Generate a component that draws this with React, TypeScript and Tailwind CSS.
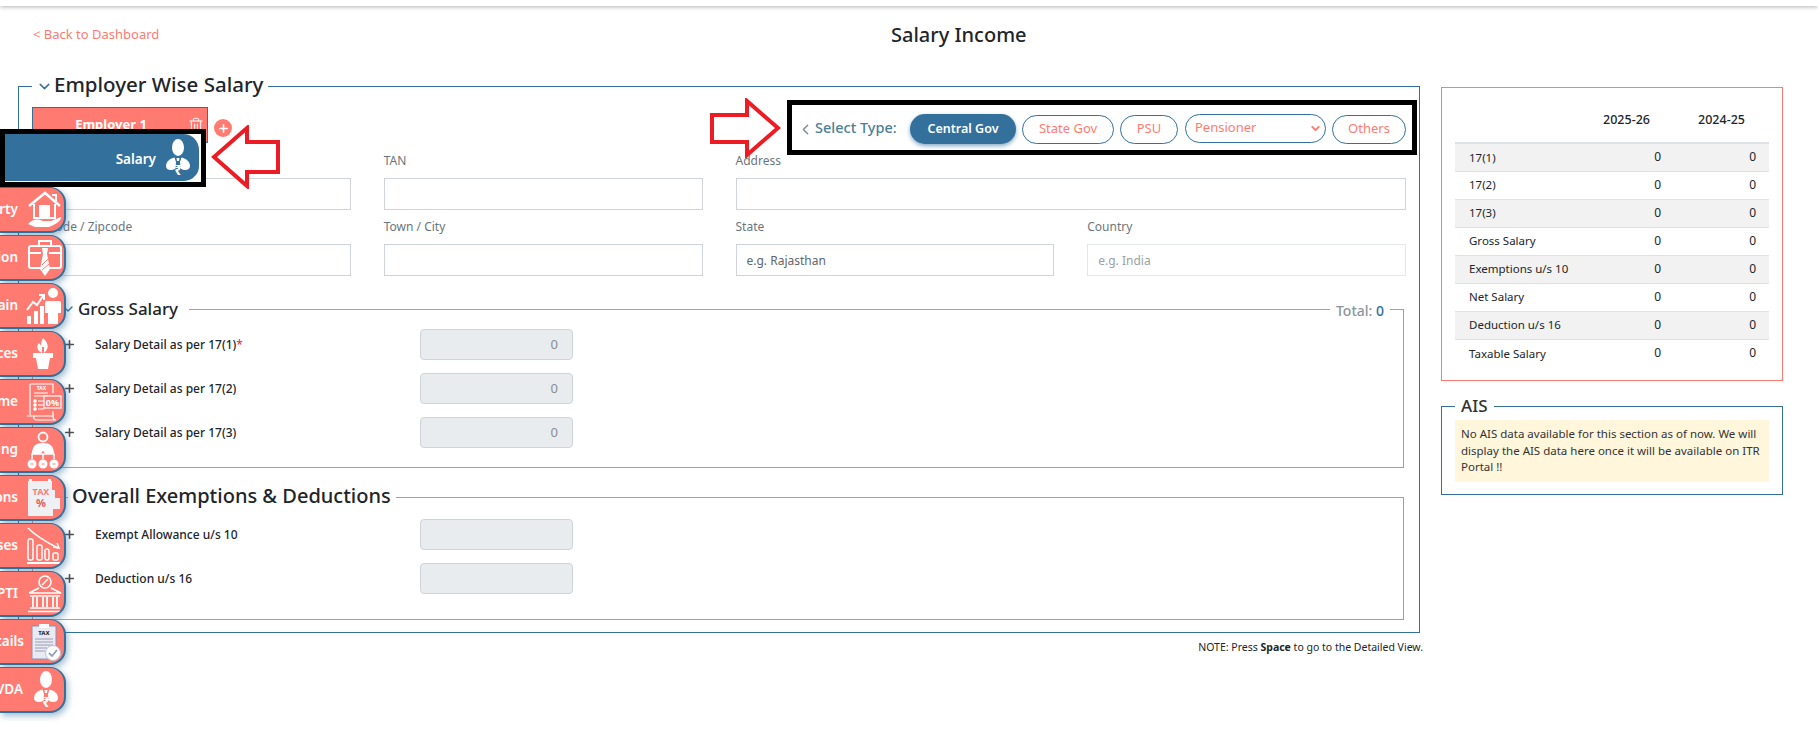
import React from 'react';
import { ChevronDown, ChevronLeft, Plus, Trash2 } from 'lucide-react';

const HouseIcon = () => (
  <svg width="36" height="38" viewBox="0 0 36 38" fill="none" stroke="#fff" strokeWidth="2">
    <path d="M2 15 L18 2 L33 15" strokeWidth="2.5" />
    <path d="M25 4 h4 v6" />
    <path d="M7 13 V27 H28 V13" />
    <rect x="13" y="15" width="9" height="12" fill="#fff" />
    <path d="M1 33 C6 27 12 28 16 30 H24 L34 26 C35 29 28 34 22 36 H8 Z" fill="#fff" stroke="none" />
  </svg>
);

const BriefcaseIcon = () => (
  <svg width="36" height="38" viewBox="0 0 36 38" fill="none" stroke="#fff" strokeWidth="2">
    <path d="M12 7 V2 H24 V7" />
    <rect x="2" y="7" width="32" height="22" rx="2" />
    <path d="M2 14 H14 M22 14 H34" />
    <path d="M15 9 H21 L20 15 L23 30 L18 37 L13 30 L16 15 Z" fill="#fff" stroke="none" />
    <path d="M15 26 L21 20 M15 31 L22 25" stroke="#ff7b72" strokeWidth="1" />
  </svg>
);

const GainIcon = () => (
  <svg width="35" height="38" viewBox="0 0 35 38" fill="#fff">
    <circle cx="27" cy="6" r="5" />
    <path d="M20 14 H33 Q35 14 35 17 V26 L32 26 V37 H22 V26 L19 26 V17 Q19 14 20 14 Z" />
    <rect x="1" y="29" width="4" height="8" />
    <rect x="8" y="24" width="4" height="13" />
    <rect x="14" y="19" width="4" height="18" />
    <path d="M1 23 L7 15 L11 18 L17 9 M13 8 H18 V13" fill="none" stroke="#fff" strokeWidth="2" />
  </svg>
);

const PlantIcon = () => (
  <svg width="20" height="31" viewBox="0 0 20 31" fill="#fff">
    <path d="M10 0 C15 5 16 9 13 13 L11 15 V9 L9 9 V15 C4 13 3 8 6 5 C7 7 8 7 8 7 C8 4 9 2 10 0 Z" />
    <path d="M0 15 H20 V20 H17 L15 31 H5 L3 20 H0 Z" />
  </svg>
);

const IncomeIcon = () => (
  <svg width="36" height="38" viewBox="0 0 36 38" fill="none" stroke="#fff" strokeWidth="1.2">
    <path d="M4 1 H27 V10 M27 28 V33 H8 M4 1 V32" />
    <path d="M1 33 H8 Q7 37 11 37 H30 Q27 37 27 33" />
    <text x="15.5" y="7" fontSize="5" fontWeight="700" textAnchor="middle" fill="#fff" stroke="none" fontFamily="Noto Sans, sans-serif">TAX</text>
    <path d="M8 10 H22 M8 13 H22" />
    <circle cx="9" cy="18" r="1.2" fill="#fff" />
    <circle cx="9" cy="22" r="1.2" fill="#fff" />
    <circle cx="9" cy="26" r="1.2" fill="#fff" />
    <path d="M12 18 H18 M12 22 H18 M12 26 H18" />
    <rect x="18" y="13" width="17" height="12" fill="#ff7b72" />
    <text x="26.5" y="22.5" fontSize="9" fontWeight="700" textAnchor="middle" fill="#fff" stroke="none" fontFamily="Noto Sans, sans-serif">0%</text>
  </svg>
);

const ClubbingIcon = () => (
  <svg width="32" height="38" viewBox="0 0 32 38" fill="none" stroke="#fff" strokeWidth="2">
    <circle cx="16" cy="6" r="4.5" strokeWidth="1.8" />
    <path d="M5 23 C5 15 9 12 16 12 C23 12 27 15 27 23 H19 L16 20 L13 23 Z" fill="#fff" stroke="none" />
    <path d="M5 28 V23 H27 V28 M16 23 V28" strokeWidth="1.5" />
    <circle cx="5" cy="33" r="4.5" fill="#fff" stroke="none" />
    <circle cx="16" cy="33" r="4.5" fill="#fff" stroke="none" />
    <circle cx="27" cy="33" r="4.5" fill="#fff" stroke="none" />
    <path d="M3.5 33 H6.5 M14.5 33 H17.5 M25.5 33 H28.5" stroke="#ff7b72" strokeWidth="1.2" />
  </svg>
);

const TaxIcon = () => (
  <svg width="34" height="38" viewBox="0 0 34 38">
    <path d="M1 2 H25 V11 H28 V19 H33 V30 H26 V37 H1 Z" fill="#eef0f4" />
    <rect x="2" y="0" width="3" height="3" fill="#fff" />
    <rect x="21" y="0" width="3" height="3" fill="#fff" />
    <text x="14" y="16" fontSize="9" fontWeight="700" textAnchor="middle" fill="#f3807b" fontFamily="Noto Sans, sans-serif">TAX</text>
    <text x="14" y="28" fontSize="11" fontWeight="700" textAnchor="middle" fill="#e35d5d" fontFamily="Noto Sans, sans-serif">%</text>
  </svg>
);

const LossIcon = () => (
  <svg width="35" height="38" viewBox="0 0 35 38" fill="none" stroke="#fff" strokeWidth="1.5">
    <path d="M2 1 C10 9 22 16 32 21" />
    <path d="M27 20 L33 21 L31 16" />
    <rect x="2" y="12" width="5" height="21" rx="2" />
    <rect x="11" y="18" width="5" height="15" rx="2" />
    <rect x="19" y="22" width="4" height="11" rx="2" />
    <rect x="27" y="26" width="5" height="7" rx="1" />
    <path d="M1 36 H34" strokeWidth="2" />
  </svg>
);

const BankIcon = () => (
  <svg width="36" height="38" viewBox="0 0 36 38" fill="none" stroke="#fff" strokeWidth="1.6">
    <circle cx="18" cy="7" r="6" />
    <path d="M15 10 L21 4" />
    <path d="M2 18 L12 13 M24 13 L34 18 H2" />
    <path d="M3 21 H33" />
    <path d="M6 22 V32 M10 22 V32 M16 22 V32 M20 22 V32 M26 22 V32 M30 22 V32" strokeWidth="1.8" />
    <path d="M3 33 H33 M1 36.5 H35" />
  </svg>
);

const ClipboardIcon = () => (
  <svg width="30" height="38" viewBox="0 0 30 38">
    <rect x="1" y="3" width="24" height="33" fill="#e9ebf3" stroke="#8f8fb0" />
    <rect x="8" y="1" width="10" height="4" fill="#fff" />
    <text x="13" y="12" fontSize="6" fontWeight="800" textAnchor="middle" fill="#333" fontFamily="Noto Sans, sans-serif">TAX</text>
    <path d="M4 16 H22 M4 19 H22 M4 22 H22 M4 25 H16 M4 28 H14" stroke="#9a9ab5" strokeWidth="1" />
    <circle cx="22" cy="30" r="7.5" fill="#fff" stroke="#bcc2d4" />
    <path d="M18 30 L21 33 L26 27" fill="none" stroke="#8da0b5" strokeWidth="1.8" />
  </svg>
);

const PersonIcon = ({ w = 24, h = 38 }: { w?: number; h?: number }) => (
  <svg width={w} height={h} viewBox="0 0 24 38" fill="#fff">
    <ellipse cx="12" cy="8.5" rx="6" ry="8.5" />
    <path d="M8.5 18.5 C3.5 19.5 0 23 0 27 C0 31 5 32.5 9.5 29.5 L10 23 Z" />
    <path d="M15.5 18.5 C20.5 19.5 24 23 24 27 C24 31 19 32.5 14.5 29.5 L14 23 Z" />
    <path d="M10.5 19 H13.5 L13 22 H11 Z" />
    <text x="12.5" y="36" fontSize="14" fontWeight="700" textAnchor="middle" fill="#fff" fontFamily="Noto Sans, sans-serif">₹</text>
  </svg>
);

const sideItems = [
  { name: 'House Property', icon: <HouseIcon />, cls: 'gap-[9px] pr-[1px]' },
  { name: 'Profession', icon: <BriefcaseIcon />, cls: 'gap-[9px] pr-[1px]' },
  { name: 'Capital Gain', icon: <GainIcon />, cls: 'gap-[8px] pr-[3px]' },
  { name: 'Other Sources', icon: <PlantIcon />, cls: 'gap-[15px] pr-[11px]' },
  { name: 'Exempt Income', icon: <IncomeIcon />, cls: 'gap-[8px] pr-[2px]' },
  { name: 'Clubbing', icon: <ClubbingIcon />, cls: 'gap-[9px] pr-[5px]' },
  { name: 'Deductions', icon: <TaxIcon />, cls: 'gap-[9px] pr-[3px]' },
  { name: 'Losses', icon: <LossIcon />, cls: 'gap-[8px] pr-[3px]' },
  { name: 'PTI', icon: <BankIcon />, cls: 'gap-[9px] pr-[1px]' },
  { name: 'Tax Details', icon: <ClipboardIcon />, cls: 'gap-[7px] pr-[3px]' },
  { name: 'VDA', icon: <PersonIcon />, cls: 'gap-[11px] pr-[6px]' },
];

const summaryRows = ['17(1)', '17(2)', '17(3)', 'Gross Salary', 'Exemptions u/s 10', 'Net Salary', 'Deduction u/s 16', 'Taxable Salary'];

const Field = ({ label, placeholder, className = '', light = false }: { label: string; placeholder?: string; className?: string; light?: boolean }) => (
  <div className={className}>
    <label className="mb-[8px] block h-[18px] text-[12px] leading-[18px] text-[#6c757d]">{label}</label>
    <input
      placeholder={placeholder}
      className={`block h-[32px] w-full border px-[10px] text-[12px] outline-none ${light ? 'border-[#e3e6ea] placeholder:text-[#9aa0a6]' : 'border-[#ced4da] placeholder:text-[#5f666d]'}`}
    />
  </div>
);

const AmountRow = ({ label, value, required }: { label: string; value?: string; required?: boolean }) => (
  <div className="flex items-center">
    <Plus className="ml-[3px] h-[13px] w-[13px] shrink-0 text-[#4b4f54]" strokeWidth={3} />
    <div className="ml-[19px] w-[325px] text-[12px] font-medium text-[#212529]">
      {label}
      {required && <span className="text-[#e8304f]">*</span>}
    </div>
    <div className="flex h-[31px] w-[153px] items-center justify-end rounded-[4px] border border-[#ced4da] bg-[#e9ecef] px-[14px] text-[13px] text-[#868e96]">
      {value}
    </div>
  </div>
);

const App: React.FC = () => {
  return (
    <div className="relative h-[747px] w-[1818px] overflow-hidden bg-white font-['Noto_Sans',sans-serif] text-[#212529]">
      <div className="h-[6px] bg-white shadow-[0_1px_4px_rgba(0,0,0,0.3)]" />

      {/* Page header */}
      <div className="flex h-[66px] items-start pl-[33px] pt-[16px]">
        <a className="w-[858px] pt-[3px] text-[13px] leading-[18px] text-[#ff7b72]">&lt; Back to Dashboard</a>
        <h1 className="text-[20px] font-medium leading-[26px] text-[#212529]">Salary Income</h1>
      </div>

      <div className="flex items-start gap-[21px] pl-[18px]">
        {/* Left column */}
        <div className="w-[1402px]">
          <fieldset className="border border-[#33709c] px-[13px] pb-[12px]">
            <legend className="flex h-[28px] items-center pl-[4px] pr-[5px]">
              <ChevronDown className="mr-[1px] h-[17px] w-[17px] text-[#33709c]" strokeWidth={2} />
              <span className="pb-[3px] text-[20.5px] font-medium leading-[25px]">Employer Wise Salary</span>
            </legend>

            <div className="flex h-[52px] items-start justify-between">
              <div className="mt-[7px] flex items-center">
                <div className="relative flex h-[36px] w-[176px] items-center justify-center border border-[#33709c] bg-[#ff7b72] pr-[18px] text-[13px] font-bold text-white">
                  Employer 1
                  <Trash2 className="absolute right-[3px] top-[9px] h-[16px] w-[16px] text-white" strokeWidth={1.5} />
                </div>
                <div className="ml-[6px] mt-[6px] flex h-[18px] w-[18px] items-center justify-center rounded-full bg-[#ff7b72]">
                  <Plus className="h-[13px] w-[13px] text-white" strokeWidth={3} />
                </div>
              </div>

              {/* Select type */}
              <div className="relative z-10 -mr-[11px] flex h-[55px] w-[630px] items-center border-[5px] border-black bg-white pl-[5px] pt-[3px]">
                <ChevronLeft className="h-[17px] w-[17px] text-[#7b8a93]" strokeWidth={2} />
                <span className="-mt-[3px] ml-[1px] w-[95px] text-[14.5px] font-medium text-[#4a7f96]">Select Type:</span>
                <button className="flex h-[30px] w-[106px] items-center justify-center rounded-full bg-[#33709c] text-[12.5px] font-semibold text-white shadow-[0_2px_4px_rgba(51,112,156,0.6)]">
                  Central Gov
                </button>
                <button className="ml-[6px] h-[29px] w-[92px] rounded-full border border-[#33709c] text-[13px] text-[#ff7b72]">State Gov</button>
                <button className="ml-[6px] h-[29px] w-[58px] rounded-full border border-[#33709c] text-[13px] text-[#ff7b72]">PSU</button>
                <div className="relative -mt-[2px] ml-[7px] h-[29px] w-[141px]">
                  <select className="h-full w-full appearance-none rounded-full border border-[#33709c] bg-white pl-[9px] text-[13px] text-[#ff7b72] outline-none">
                    <option>Pensioner</option>
                  </select>
                  <ChevronDown className="absolute right-[4px] top-[8px] h-[13px] w-[13px] text-[#ff7b72]" strokeWidth={3.5} />
                </div>
                <button className="ml-[6px] h-[29px] w-[74px] rounded-full border border-[#33709c] text-[13px] text-[#ff7b72]">Others</button>
              </div>
            </div>

            <div className="grid grid-cols-4 gap-x-[33px] gap-y-[8px]">
              <Field label="Flat / Door No." />
              <Field label="TAN" />
              <Field label="Address" className="col-span-2" />
              <Field label="Pincode / Zipcode" />
              <Field label="Town / City" />
              <Field label="State" placeholder="e.g. Rajasthan" />
              <Field label="Country" placeholder="e.g. India" light />
            </div>

            {/* Gross salary */}
            <fieldset className="relative mt-[19px] w-[1372px] border border-[#ff7b72] pb-[19px] pl-[27px]">
              <legend className="flex h-[28px] items-center pr-[11px]">
                <ChevronDown className="mr-[2px] h-[16px] w-[16px] text-[#33709c]" strokeWidth={2} />
                <span className="text-[17px] font-medium">Gross Salary</span>
              </legend>
              <div className="absolute -top-[25px] right-[13px] bg-white px-[6px] text-[14px] font-medium leading-[26px] text-[#8c949b]">
                Total: <span className="text-[#33709c]">0</span>
              </div>
              <div className="mt-[6px] flex flex-col gap-[13px]">
                <AmountRow label="Salary Detail as per 17(1)" value="0" required />
                <AmountRow label="Salary Detail as per 17(2)" value="0" />
                <AmountRow label="Salary Detail as per 17(3)" value="0" />
              </div>
            </fieldset>

            {/* Overall exemptions */}
            <fieldset className="mt-[14px] w-[1372px] border border-[#ff7b72] pb-[25px] pl-[27px]">
              <legend className="ml-[8px] flex h-[30px] items-center pl-[4px] pr-[5px]">
                <span className="pb-[2px] text-[20px] font-medium leading-[26px]">Overall Exemptions &amp; Deductions</span>
              </legend>
              <div className="mt-[7px] flex flex-col gap-[13px]">
                <AmountRow label="Exempt Allowance u/s 10" />
                <AmountRow label="Deduction u/s 16" />
              </div>
            </fieldset>
          </fieldset>

          <p className="-mr-[3px] mt-[6px] text-right text-[10.5px] leading-[16px] text-[#212529]">
            NOTE: Press <b>Space</b> to go to the Detailed View.
          </p>
        </div>

        {/* Right column */}
        <div className="w-[342px] pt-[15px]">
          <div className="h-[294px] border border-[#ff7b72] px-[13px] pt-[11px]">
            <table className="w-full table-fixed border-collapse text-[11.5px]">
              <thead>
                <tr className="h-[44px] border-b-2 border-[#dee2e6] text-[12.5px]">
                  <th className="w-[124px]" />
                  <th className="font-medium">2025-26</th>
                  <th className="font-medium">2024-25</th>
                </tr>
              </thead>
              <tbody>
                {summaryRows.map((row, i) => (
                  <tr key={row} className={`h-[28px] border-b border-[#dee2e6] last:border-b-0 ${i % 2 === 0 ? 'bg-[#f2f2f2]' : ''}`}>
                    <td className="pl-[14px]">{row}</td>
                    <td className="pr-[13px] text-right text-[12px]">0</td>
                    <td className="pr-[13px] text-right text-[12px]">0</td>
                  </tr>
                ))}
              </tbody>
            </table>
          </div>

          <fieldset className="mt-[13px] border border-[#33709c] px-[13px] pb-[12px]">
            <legend className="px-[6px] pb-[1px] text-[17px] font-medium leading-[23px] text-[#333]">AIS</legend>
            <div className="mt-[2px] bg-[#fff6dc] px-[6px] py-[6px] text-[11.5px] leading-[16.5px] text-[#333]">
              No AIS data available for this section as of now. We will display the AIS data here once it will be available on ITR Portal !!
            </div>
          </fieldset>
        </div>
      </div>

      {/* Floating section menu */}
      <div className="absolute left-0 top-[129px] z-20">
        <div className="h-[58px] w-[206px] border-[5px] border-black bg-white">
          <div className="flex h-full w-[195px] items-center justify-end gap-[7px] rounded-r-2xl border-b border-r border-white bg-[#33709c] pr-[6px] text-[13.5px] font-semibold text-white">
            <span className="pt-[3px]">Salary</span>
            <PersonIcon w={30} h={38} />
          </div>
        </div>
        <div className="flex w-[66px] flex-col gap-[2px] pb-[4px]">
          {sideItems.map((item) => (
            <div
              key={item.name}
              className={`flex h-[46px] items-center justify-end overflow-hidden whitespace-nowrap rounded-r-2xl border border-b-2 border-r-2 border-l-0 border-[#33709c] bg-[#ff7b72] text-[13.5px] font-semibold text-white shadow-[2px_3px_6px_rgba(51,112,156,0.45)] ${item.cls}`}
            >
              {item.name}
              <span className="shrink-0">{item.icon}</span>
            </div>
          ))}
        </div>
      </div>

      {/* Annotation arrows */}
      <svg className="absolute left-[211px] top-[125px] z-30" width="70" height="64" viewBox="0 0 70 64">
        <path d="M3 32 L36 3 V17 H67 V47 H36 V61 Z" fill="#fff" stroke="#ed1c24" strokeWidth="4" />
      </svg>
      <svg className="absolute left-[709px] top-[98px] z-30" width="72" height="60" viewBox="0 0 72 60">
        <path d="M69 30 L38 3 V17 H3 V44 H38 V57 Z" fill="#fff" stroke="#ed1c24" strokeWidth="4" />
      </svg>
    </div>
  );
};

export default App;
